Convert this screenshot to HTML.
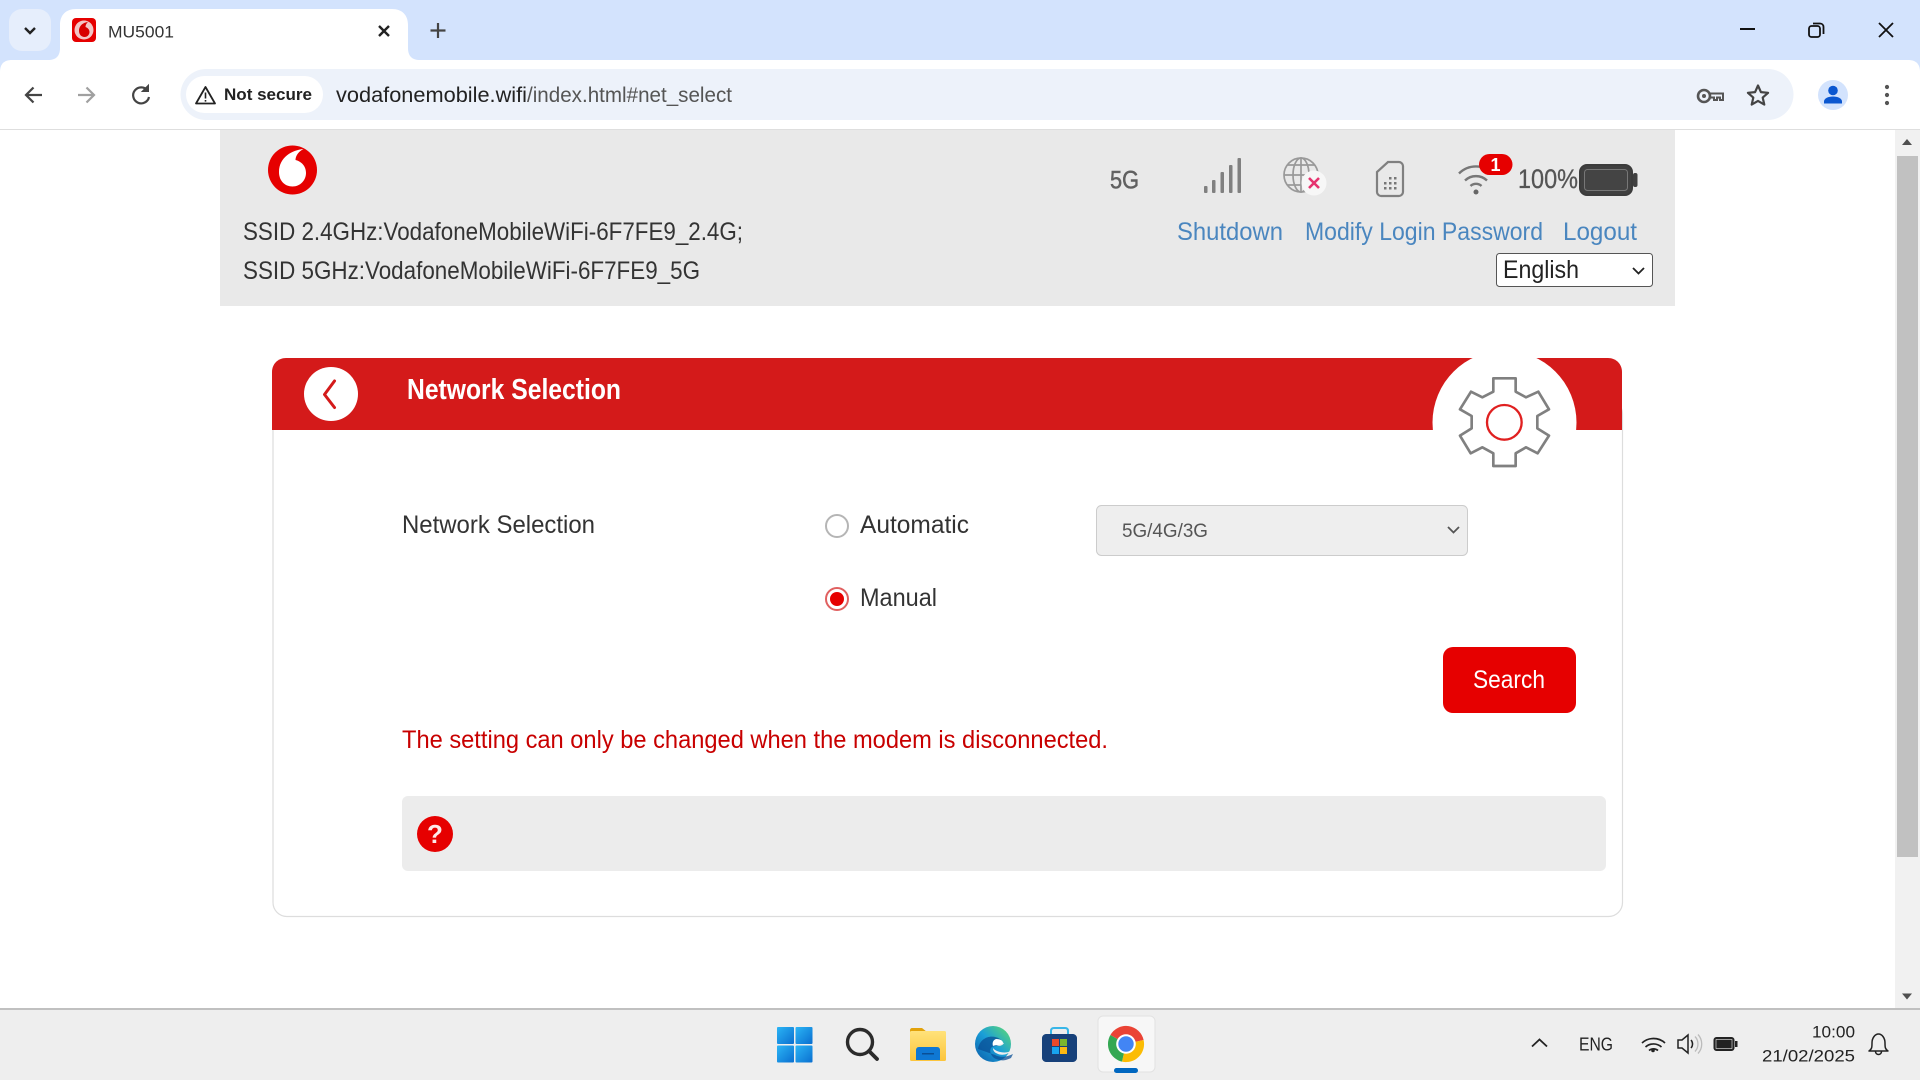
<!DOCTYPE html>
<html lang="en">
<head>
<meta charset="utf-8">
<title>MU5001</title>
<style>
html,body{margin:0;padding:0;background:#fff;overflow:hidden}
svg{display:block}
text{font-family:"Liberation Sans",sans-serif}
</style>
</head>
<body>
<svg xmlns="http://www.w3.org/2000/svg" width="1920" height="1080" viewBox="0 0 1920 1080">
<defs>
<linearGradient id="win" x1="0" y1="0" x2="1" y2="1"><stop offset="0" stop-color="#2bb5f5"/><stop offset="1" stop-color="#0a6fd0"/></linearGradient>
<linearGradient id="edge" x1="0" y1="1" x2="1" y2="0"><stop offset="0" stop-color="#0b5aa8"/><stop offset=".5" stop-color="#1a9fd8"/><stop offset="1" stop-color="#62dd6c"/></linearGradient>
<linearGradient id="fold" x1="0" y1="0" x2="0" y2="1"><stop offset="0" stop-color="#ffe27a"/><stop offset="1" stop-color="#fcc53c"/></linearGradient>
</defs>

<!-- Browser chrome -->
<rect width="1920" height="130" fill="#d3e3fd"/>
<rect x="9" y="9" width="42" height="42" rx="13" fill="#e6eefc"/>
<path d="M25 28l5 5 5-5" fill="none" stroke="#222" stroke-width="2.4"/>
<path d="M48 60c8 0 12-4 12-12V25c0-10 6-16 16-16h316c10 0 16 6 16 16v23c0 8 4 12 12 12z" fill="#fff"/>
<rect x="72" y="18" width="24" height="24" rx="4" fill="#e60000"/>
<circle cx="84" cy="30" r="9.5" fill="#f3c5c5"/>
<path d="M88 22c-4 .4-9 3-9 9 0 3.500 2.500 6 5.500 6 3 0 5-2.500 5-5 0-3-2.500-4.500-4-5 0-2 1-3.800 2.500-5z" fill="#d80000"/>
<text x="108" y="37.500" font-size="17" fill="#333" textLength="66" lengthAdjust="spacingAndGlyphs">MU5001</text>
<path d="M379 26l10 10M389 26l-10 10" stroke="#222" stroke-width="2.4" fill="none"/>
<path d="M438 23v15M430.500 30.500h15" stroke="#444" stroke-width="2.200" fill="none"/>
<path d="M1740 29h15" stroke="#111" stroke-width="2"/>
<rect x="1809" y="26" width="11" height="11" rx="2.500" fill="none" stroke="#111" stroke-width="1.800"/>
<path d="M1813 23.500h7c2 0 3.500 1.500 3.500 3.500v7" fill="none" stroke="#111" stroke-width="1.800"/>
<path d="M1879 23l14 14M1893 23l-14 14" stroke="#111" stroke-width="1.800"/>

<path d="M0 129V72c0-8 4-12 12-12h1896c8 0 12 4 12 12v57z" fill="#fff"/>
<rect y="129" width="1920" height="1" fill="#dedede"/>
<path d="M42 95H26M33.500 87.500L26 95l7.500 7.500" fill="none" stroke="#444" stroke-width="2.200"/>
<path d="M78 95h16M86.500 87.500L94 95l-7.500 7.500" fill="none" stroke="#a0a0a0" stroke-width="2.200"/>
<path d="M147.500 90.500A8 8 0 1 0 149 97" fill="none" stroke="#444" stroke-width="2.200"/>
<path d="M148.500 85v6.500h-6.500z" fill="#444" stroke="#444"/>
<rect x="180.500" y="69" width="1613" height="51" rx="25.500" fill="#edf2fa"/>
<rect x="186" y="76" width="137" height="37" rx="18.500" fill="#fff"/>
<path d="M205.500 87l9.500 16.500h-19z" fill="none" stroke="#222" stroke-width="1.800" stroke-linejoin="round"/>
<path d="M205.500 92.500v6M205.500 100v1.600" stroke="#222" stroke-width="1.600"/>
<text x="224" y="100" font-size="17" font-weight="bold" fill="#222" textLength="88" lengthAdjust="spacingAndGlyphs">Not secure</text>
<text x="336" y="102" font-size="21" fill="#222" textLength="191" lengthAdjust="spacingAndGlyphs">vodafonemobile.wifi</text>
<text x="527" y="102" font-size="21" fill="#555" textLength="205" lengthAdjust="spacingAndGlyphs">/index.html#net_select</text>
<circle cx="1704" cy="96" r="6" fill="none" stroke="#555" stroke-width="2.600"/>
<circle cx="1704" cy="96" r="2" fill="#555"/>
<path d="M1710 93.500h13v6.500h-3v-2.500h-3V100h-3v-2.500h-4" fill="none" stroke="#555" stroke-width="2"/>
<path d="M1758 85.500l2.900 6.600 7.200.7-5.400 4.800 1.600 7-6.300-3.700-6.300 3.700 1.600-7-5.400-4.800 7.200-.7z" fill="none" stroke="#444" stroke-width="2.200" stroke-linejoin="round"/>
<circle cx="1833" cy="95" r="15" fill="#d3e3fd"/>
<circle cx="1833" cy="90.500" r="4.800" fill="#0b57d0"/>
<path d="M1824 103.500v-2c0-3 4-5 9-5s9 2 9 5v2z" fill="#0b57d0"/>
<circle cx="1887" cy="87" r="2.100" fill="#555"/><circle cx="1887" cy="95" r="2.100" fill="#555"/><circle cx="1887" cy="103" r="2.100" fill="#555"/>

<!-- Scrollbar -->
<rect x="1895" y="130" width="25" height="878" fill="#f1f1f1"/>
<rect x="1897" y="156" width="21" height="701" fill="#c1c1c1"/>
<path d="M1907 139l5 6h-10z" fill="#505050"/>
<path d="M1902 993.500h10l-5 6z" fill="#505050"/>

<!-- Router header -->
<rect x="220" y="130" width="1455" height="176" fill="#e9e9e9"/>
<circle cx="292.500" cy="170" r="24.500" fill="#e60000"/>
<path d="M303.500 149C292.500 150 279 157 279 172C279 181 285 186.500 292.500 186.500C300.500 186.500 306 180 306 173C306 165 300 161 295.500 160C295.500 155 299.500 151 303.500 149Z" fill="#fff"/>
<text x="243" y="240" font-size="25" fill="#333" textLength="500" lengthAdjust="spacingAndGlyphs">SSID 2.4GHz:VodafoneMobileWiFi-6F7FE9_2.4G;</text>
<text x="243" y="279" font-size="25" fill="#333" textLength="457" lengthAdjust="spacingAndGlyphs">SSID 5GHz:VodafoneMobileWiFi-6F7FE9_5G</text>

<text x="1110" y="188.500" font-size="25" fill="#606060" stroke="#606060" stroke-width=".5" textLength="29" lengthAdjust="spacingAndGlyphs">5G</text>
<g fill="#808080">
<rect x="1204" y="186" width="3.500" height="7" rx="1"/>
<rect x="1212" y="180" width="3.500" height="13" rx="1"/>
<rect x="1220.500" y="172" width="3.500" height="21" rx="1"/>
<rect x="1229" y="165" width="3.500" height="28" rx="1"/>
<rect x="1237.500" y="158" width="3.500" height="35" rx="1"/>
</g>
<g fill="none" stroke="#999" stroke-width="1.700">
<circle cx="1301" cy="175" r="17"/>
<ellipse cx="1301" cy="175" rx="8" ry="17"/>
<path d="M1284 175h34M1287 165h28M1287 185h28M1301 158v34"/>
</g>
<circle cx="1314" cy="183" r="12.500" fill="#f7f7f7"/>
<path d="M1309 178l10 10M1319 178l-10 10" stroke="#e6336f" stroke-width="2.600"/>
<path d="M1388 162h11c2 0 4 2 4 4v26c0 2-2 4-4 4h-18c-2 0-4-2-4-4v-20z" fill="none" stroke="#808080" stroke-width="2.200"/>
<g fill="#777">
<rect x="1384" y="182" width="2.500" height="2.500"/><rect x="1389" y="182" width="2.500" height="2.500"/><rect x="1394" y="182" width="2.500" height="2.500"/>
<rect x="1384" y="187" width="2.500" height="2.500"/><rect x="1389" y="187" width="2.500" height="2.500"/><rect x="1394" y="187" width="2.500" height="2.500"/>
<rect x="1389" y="177" width="2.500" height="2.500"/><rect x="1394" y="177" width="2.500" height="2.500"/>
</g>
<g fill="none" stroke="#777" stroke-width="2.400">
<path d="M1459 173.500A24 24 0 0 1 1493 173.500"/>
<path d="M1465 180.500A16 16 0 0 1 1487 180.500"/>
<path d="M1470.500 186A8 8 0 0 1 1481.500 186"/>
</g>
<circle cx="1476" cy="192" r="2.500" fill="#666"/>
<rect x="1479" y="154" width="33.500" height="21" rx="10.500" fill="#e60000"/>
<text x="1495.500" y="171" font-size="18" font-weight="bold" fill="#fff" text-anchor="middle">1</text>
<text x="1518" y="188" font-size="27" fill="#555" stroke="#555" stroke-width=".3" textLength="60" lengthAdjust="spacingAndGlyphs">100%</text>
<rect x="1580" y="165" width="52" height="30" rx="7" fill="#404040" stroke="#3c3c3c" stroke-width="2"/>
<rect x="1584.500" y="169.500" width="43" height="21" rx="3" fill="#444" stroke="#777" stroke-width="1"/>
<rect x="1633" y="173" width="4.500" height="14" rx="2" fill="#404040"/>

<g font-size="25" fill="#4a86bf">
<text x="1177" y="240" textLength="106" lengthAdjust="spacingAndGlyphs">Shutdown</text>
<text x="1305" y="240" textLength="238" lengthAdjust="spacingAndGlyphs">Modify Login Password</text>
<text x="1563" y="240" textLength="74" lengthAdjust="spacingAndGlyphs">Logout</text>
</g>
<rect x="1496.500" y="253.500" width="156" height="33" rx="3" fill="#fff" stroke="#555"/>
<text x="1503" y="278" font-size="25" fill="#222" textLength="76" lengthAdjust="spacingAndGlyphs">English</text>
<path d="M1633 268l5.500 5.500 5.500-5.500" fill="none" stroke="#222" stroke-width="1.800"/>

<!-- Card -->
<rect x="273" y="400" width="1349.500" height="516.500" rx="14" fill="#fff" stroke="#ddd" stroke-width="1.200"/>
<path d="M272 430v-58c0-8 6-14 14-14h1322c8 0 14 6 14 14v58z" fill="#d41a1a"/>
<circle cx="1504.500" cy="422.500" r="72" fill="#fff"/>
<rect x="1420" y="430" width="170" height="70" fill="#fff"/>
<circle cx="331" cy="394" r="27" fill="#fff"/>
<path d="M334.500 381l-10 13.500 10 13" fill="none" stroke="#d41a1a" stroke-width="3" stroke-linecap="round" stroke-linejoin="round"/>
<text x="407" y="399" font-size="29" font-weight="bold" fill="#fff" textLength="214" lengthAdjust="spacingAndGlyphs">Network Selection</text>
<g transform="translate(1400 340) scale(.3333)">
<path d="M280 115H347V155L378 172L415 155L447 208L412 228V265L447 287L413 340L378 322L347 340V378H280V340L247 322L212 340L180 287L215 265V228L180 208L213 155L247 172L280 155Z" fill="#fff" stroke="#808080" stroke-width="8" stroke-linejoin="round"/>
<circle cx="313" cy="247" r="52" fill="none" stroke="#e02020" stroke-width="7"/>
</g>

<text x="402" y="533" font-size="25" fill="#333" textLength="193" lengthAdjust="spacingAndGlyphs">Network Selection</text>
<circle cx="837" cy="526" r="11" fill="#fff" stroke="#b5b5b5" stroke-width="2"/>
<text x="860" y="533" font-size="25" fill="#333" textLength="109" lengthAdjust="spacingAndGlyphs">Automatic</text>
<circle cx="837" cy="599" r="11" fill="#fff" stroke="#e06060" stroke-width="2"/>
<circle cx="837" cy="599" r="7" fill="#e60000"/>
<text x="860" y="606" font-size="25" fill="#333" textLength="77" lengthAdjust="spacingAndGlyphs">Manual</text>
<rect x="1096.500" y="505.500" width="371" height="50" rx="5" fill="#eee" stroke="#ccc"/>
<text x="1122" y="537" font-size="19" fill="#555" textLength="86" lengthAdjust="spacingAndGlyphs">5G/4G/3G</text>
<path d="M1448 527l5.500 5.500 5.500-5.500" fill="none" stroke="#555" stroke-width="1.800"/>

<rect x="1443" y="647" width="133" height="66" rx="10" fill="#e60000"/>
<text x="1473" y="688" font-size="25" fill="#fff" textLength="72" lengthAdjust="spacingAndGlyphs">Search</text>
<text x="402" y="748" font-size="25" fill="#c80000" textLength="706" lengthAdjust="spacingAndGlyphs">The setting can only be changed when the modem is disconnected.</text>
<rect x="402" y="796" width="1204" height="75" rx="6" fill="#ececec"/>
<circle cx="435" cy="834" r="18" fill="#e60000"/>
<text x="435" y="843" font-size="26" font-weight="bold" fill="#fdeaea" text-anchor="middle">?</text>

<!-- Taskbar -->
<rect y="1010" width="1920" height="70" fill="#eeeeee"/>
<rect y="1008" width="1920" height="2" fill="#c0c0c0"/>
<g fill="url(#win)">
<rect x="777" y="1027" width="17" height="17" rx="1"/>
<rect x="795.500" y="1027" width="17" height="17" rx="1"/>
<rect x="777" y="1045.500" width="17" height="17" rx="1"/>
<rect x="795.500" y="1045.500" width="17" height="17" rx="1"/>
</g>
<circle cx="860" cy="1042" r="12.500" fill="none" stroke="#2b2b2b" stroke-width="3.400"/>
<path d="M869 1051l8 8" stroke="#2b2b2b" stroke-width="3.800" stroke-linecap="round"/>
<path d="M910 1030c0-1 1-2 2-2h10l5 4h17v10h-34z" fill="#e2a20b"/>
<rect x="910" y="1031" width="36" height="30" rx="1.500" fill="url(#fold)"/>
<path d="M916 1060v-10c0-1.500 1-3 3-3h18c2 0 3 1.500 3 3v10z" fill="#0f78d4"/>
<rect x="922" y="1053" width="12" height="1.500" fill="#0a4f96"/>
<circle cx="993" cy="1044" r="18" fill="url(#edge)"/>
<path d="M978 1049c2-12 14-15 22-10 2 1 3 4 1 6-3 2-8 0-10 3-2 3 0 9 5 11 6 2 8 2 15-1l2-4c-6 3-12 4-18 1z" fill="#0a4f96" opacity=".75"/>
<path d="M993 1044c3-3 8-2 11-1-1 2-4 4-8 2zM1011 1051c-4 4-10 5-15 2-2-1-3-3-3-5 3 4 12 6 18 3z" fill="#eeeeee"/>
<path d="M996 1039c5 0 7 2 7 4-2 2-8 2-10 3-1-3 0-6 3-7z" fill="#fff"/>
<path d="M1046 1034h27c2 0 4 2 4 4v20c0 2-2 4-4 4h-27c-2 0-4-2-4-4v-20c0-2 2-4 4-4z" fill="#17417a"/>
<path d="M1051 1034v-3c0-2 1-3 3-3h11c2 0 3 1 3 3v3" fill="none" stroke="#38b6e8" stroke-width="2"/>
<rect x="1052" y="1039" width="7" height="7" fill="#e8492a"/>
<rect x="1060" y="1039" width="7" height="7" fill="#7cb62e"/>
<rect x="1052" y="1047" width="7" height="7" fill="#18a4ee"/>
<rect x="1060" y="1047" width="7" height="7" fill="#fcb912"/>
<rect x="1098" y="1016" width="57" height="56" rx="5" fill="#f7f7f7" stroke="#e2e2e2"/>
<path d="M1126 1044L1110.400 1035A18 18 0 0 1 1143.600 1040z" fill="#ea4335"/>
<path d="M1126 1044L1143.600 1040A18 18 0 0 1 1122 1061.600z" fill="#fbbc04"/>
<path d="M1126 1044L1122 1061.600A18 18 0 0 1 1110.400 1035z" fill="#34a853"/>
<circle cx="1126" cy="1044" r="9.800" fill="#fff"/>
<circle cx="1126" cy="1044" r="7.700" fill="#4285f4"/>
<rect x="1114" y="1068" width="24" height="5" rx="2.500" fill="#0067c0"/>

<path d="M1532 1046.500l7.500-7 7.500 7" fill="none" stroke="#222" stroke-width="1.800"/>
<text x="1579" y="1050.500" font-size="18" fill="#222" textLength="34" lengthAdjust="spacingAndGlyphs">ENG</text>
<g fill="none" stroke="#222" stroke-width="1.700">
<path d="M1642 1043a17 17 0 0 1 23 0"/>
<path d="M1645.500 1047a12 12 0 0 1 16 0"/>
<path d="M1649 1050.500a7 7 0 0 1 9 0"/>
</g>
<circle cx="1653" cy="1050.500" r="1.800" fill="#222"/>
<path d="M1678 1040h4l6-5v18l-6-5h-4z" fill="none" stroke="#222" stroke-width="1.500"/>
<path d="M1691 1040a6 6 0 0 1 0 8" fill="none" stroke="#222" stroke-width="1.500"/>
<path d="M1695 1036.500a11 11 0 0 1 0 15M1698 1034.500a14 14 0 0 1 0 19" fill="none" stroke="#bbb" stroke-width="1.300"/>
<rect x="1714" y="1037.500" width="20" height="13" rx="2.500" fill="#222" stroke="#222"/>
<rect x="1716" y="1039.500" width="16" height="9" fill="#222" stroke="#eee" stroke-width=".6"/>
<rect x="1735" y="1041" width="2.500" height="6" fill="#222"/>
<text x="1812" y="1037.500" font-size="17" fill="#222" textLength="43" lengthAdjust="spacingAndGlyphs">10:00</text>
<text x="1762" y="1061.500" font-size="17" fill="#222" textLength="93" lengthAdjust="spacingAndGlyphs">21/02/2025</text>
<path d="M1869 1051c3-2 3-4 3-8 0-5 3-9 6.500-9s6.500 4 6.500 9c0 4 0 6 3 8z" fill="none" stroke="#222" stroke-width="1.500" stroke-linejoin="round"/>
<path d="M1875.500 1051.500a3 3 0 0 0 6 0" fill="none" stroke="#222" stroke-width="1.500"/>
</svg>
</body>
</html>
